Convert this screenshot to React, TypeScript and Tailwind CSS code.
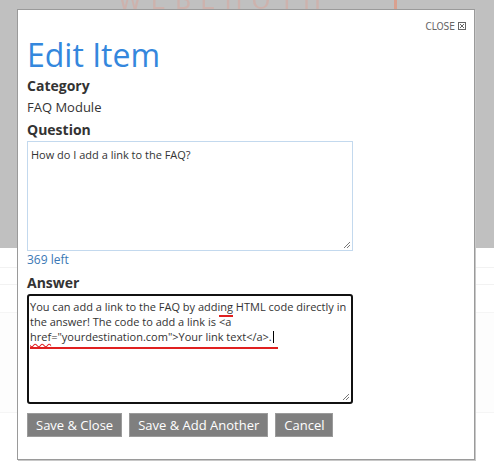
import React from "react";

function Resize() {
  return (
    <svg width="9" height="9" viewBox="0 0 9 9" className="absolute right-[1px] bottom-[1px]">
      <line x1="8" y1="2" x2="2" y2="8" stroke="#777" strokeWidth="1" />
      <line x1="8" y1="5" x2="5" y2="8" stroke="#777" strokeWidth="1" />
    </svg>
  );
}

const btn = "h-[24px] px-[8px] bg-[#7f7f7f] text-white text-[13px] border border-[#9b9b9b] leading-none";

export default function App() {
  return (
    <div className="relative w-[494px] h-[473px] overflow-hidden bg-white font-['Open_Sans',sans-serif] text-[#333]">
      {/* page behind overlay */}
      <div className="h-[248px] bg-[#c0c0c0] flex items-start justify-between pl-[118px] pr-[97px] overflow-hidden">
        <div className="mt-[-14px] text-[24px] leading-[30px] tracking-[9px] text-[#d6aaa1] opacity-60 font-['DejaVu_Sans',sans-serif] blur-[0.5px]">WEBEHOTH</div>
        <div className="w-[3px] h-[9px] bg-[#d9a08f]" />
      </div>
      <div className="h-[20px] border-b border-[#f2f2f2]" />
      <div className="h-[17px] border-b border-[#f2f2f2]" />
      <div className="h-[28px] border-b border-[#f5f5f5]" />
      <div className="h-[100px] border-b border-[#f5f5f5] bg-[#fdfdfd]" />

      {/* modal overlay */}
      <div className="absolute left-[17px] top-[9px] w-[458px] h-[451px] bg-white border border-[#9a9a9a] shadow-[1px_1px_0_#c8c8c8] pl-[9px] pr-[8px] flex flex-col items-start">
        <div className="self-stretch flex justify-end items-center gap-[3px] pt-[9px] h-[24px] text-[#666]">
          <span className="text-[10px] leading-none font-['Liberation_Sans_Narrow','DejaVu_Sans_Condensed',sans-serif]">CLOSE</span>
          <svg width="8" height="8" viewBox="0 0 8 8" className="mb-[1px]">
            <rect x="0.5" y="0.5" width="7" height="7" fill="none" stroke="#666" />
            <line x1="2" y1="2" x2="6" y2="6" stroke="#666" />
            <line x1="6" y1="2" x2="2" y2="6" stroke="#666" />
          </svg>
        </div>
        <h1 className="text-[32px] leading-[40px] text-[#3487dd] font-normal mt-[1px]">Edit Item</h1>
        <div className="text-[14px] font-bold leading-[20px] mt-[1px]">Category</div>
        <div className="text-[13px] leading-[18px] mt-[2px]">FAQ Module</div>
        <div className="text-[14px] font-bold leading-[20px] mt-[4px]">Question</div>
        <div className="relative w-[326px] h-[110px] mt-[1px] border border-[#c3d9ee] px-[3px] pt-[5px] text-[11px] leading-[15px]">
          How do I add a link to the FAQ?
          <Resize />
        </div>
        <div className="text-[12px] leading-[16px] text-[#3a78b5] mt-[1px]">369 left</div>
        <div className="text-[14px] font-bold leading-[20px] mt-[5px]">Answer</div>
        <div className="relative w-[326px] h-[110px] mt-[1px] border-2 border-[#111] rounded-[3px] pl-[1px] pr-[2px] pt-[3px] text-[11px] leading-[15px] text-[#333]">
          You can add a link to the FAQ by adding HTML code directly in the answer! The code to add a link is{" "}
          <span className="relative">
            &lt;a
            <span className="absolute left-0 right-[-2px] top-[1px] h-[2px] bg-[#e02020]" />
          </span>
          <br />
          <span className="relative">
            <span className="underline decoration-wavy decoration-[#e02020] underline-offset-[2px]">href</span>
            ="yourdestination.com"&gt;Your link text&lt;/a&gt;.
            <span className="absolute left-0 right-[-6px] bottom-[-5px] h-[2px] bg-[#e02020]" />
          </span>
          <span className="inline-block w-[1px] h-[12px] bg-black align-[-2px] ml-[1px]" />
          <Resize />
        </div>
        <div className="flex gap-[7px] mt-[9px]">
          <button className={btn}>Save &amp; Close</button>
          <button className={btn}>Save &amp; Add Another</button>
          <button className={btn}>Cancel</button>
        </div>
      </div>
    </div>
  );
}
